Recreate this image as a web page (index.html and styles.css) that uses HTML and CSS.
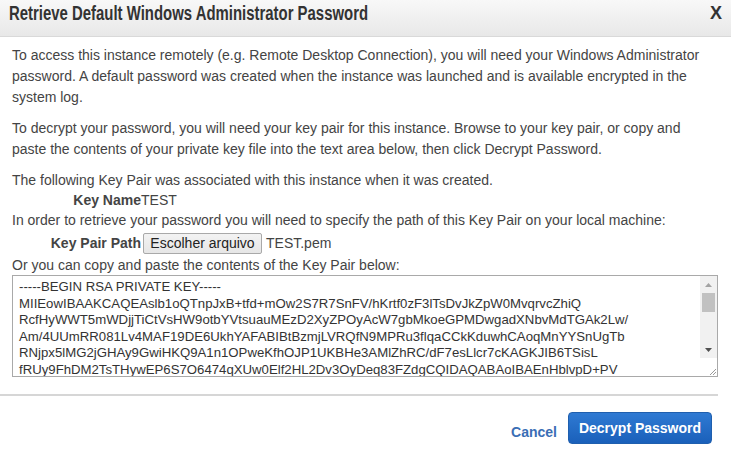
FILE: index.html
```html
<!DOCTYPE html>
<html>
<head>
<meta charset="utf-8">
<title>Retrieve Default Windows Administrator Password</title>
<link rel="stylesheet" href="styles.css">
</head>
<body>
<div class="modal">
  <div class="header">
    <h1 class="title">Retrieve Default Windows Administrator Password</h1>
    <span class="close">X</span>
  </div>
  <div class="content">
    <p class="para">To access this instance remotely (e.g. Remote Desktop Connection), you will need your Windows Administrator password. A default password was created when the instance was launched and is available encrypted in the system log.</p>
    <p class="para">To decrypt your password, you will need your key pair for this instance. Browse to your key pair, or copy and paste the contents of your private key file into the text area below, then click Decrypt Password.</p>
    <div class="info">
      <div class="line">The following Key Pair was associated with this instance when it was created.</div>
      <div class="field"><span class="label">Key Name</span><span>TEST</span></div>
      <div class="line">In order to retrieve your password you will need to specify the path of this Key Pair on your local machine:</div>
      <div class="field field-file"><span class="label">Key Pair Path</span><span class="filebtn">Escolher arquivo</span><span class="filename">TEST.pem</span></div>
      <div class="line">Or you can copy and paste the contents of the Key Pair below:</div>
    </div>
    <div class="textarea">
      <div class="ta-text">-----BEGIN RSA PRIVATE KEY-----
MIIEowIBAAKCAQEAslb1oQTnpJxB+tfd+mOw2S7R7SnFV/hKrtf0zF3lTsDvJkZpW0MvqrvcZhiQ
RcfHyWWT5mWDjjTiCtVsHW9otbYVtsuauMEzD2XyZPOyAcW7gbMkoeGPMDwgadXNbvMdTGAk2Lw/
Am/4UUmRR081Lv4MAF19DE6UkhYAFABIBtBzmjLVRQfN9MPRu3flqaCCkKduwhCAoqMnYYSnUgTb
RNjpx5lMG2jGHAy9GwiHKQ9A1n1OPweKfhOJP1UKBHe3AMlZhRC/dF7esLlcr7cKAGKJIB6TSisL
fRUy9FhDM2TsTHywEP6S7O6474qXUw0Elf2HL2Dv3OyDeq83FZdgCQIDAQABAoIBAEnHblvpD+PV</div>
      <div class="scrollbar">
        <div class="sb-btn"><svg width="7" height="4" viewBox="0 0 7 4"><path d="M0 4 L3.5 0 L7 4 Z" fill="#a3a3a3"/></svg></div>
        <div class="sb-track"><div class="sb-thumb"></div></div>
        <div class="sb-btn"><svg width="7" height="4" viewBox="0 0 7 4"><path d="M0 0 L3.5 4 L7 0 Z" fill="#505050"/></svg></div>
        <div class="sb-corner"><svg width="10" height="10" viewBox="0 0 10 10"><path d="M9 3 L3 9 M9 6 L6 9" stroke="#9a9a9a" stroke-width="1"/></svg></div>
      </div>
    </div>
  </div>
  <div class="divider"></div>
  <div class="footer">
    <a class="cancel">Cancel</a>
    <button class="primary">Decrypt Password</button>
  </div>
</div>
</body>
</html>
```
FILE: styles.css
```css
html, body {
  margin: 0;
  padding: 0;
  background: #ffffff;
}
body {
  font-family: "Liberation Sans", Arial, sans-serif;
  color: #444444;
  width: 731px;
  height: 452px;
  overflow: hidden;
}
.modal {
  display: flex;
  flex-direction: column;
}
.header {
  height: 36px;
  border-bottom: 1px solid #d9d9d9;
  background: linear-gradient(#f8f8f8, #e8e8e8);
  display: flex;
  align-items: center;
  justify-content: space-between;
  padding: 0 9px 0 9px;
}
.title {
  margin: 0;
  font-family: "Liberation Sans", Arial, sans-serif;
  font-size: 19.5px;
  font-weight: bold;
  color: #333333;
  line-height: 22px;
  margin-top: -10px;
  white-space: nowrap;
  transform: scaleX(0.765);
  transform-origin: left center;
}
.close {
  font-size: 18px;
  font-weight: bold;
  color: #333333;
  font-family: "Liberation Sans", Arial, sans-serif;
  margin-top: -10px;
}
.content {
  padding: 8px 13px 0 12px;
  font-size: 14px;
}
.para {
  margin: 0 0 10px 0;
  line-height: 21px;
}
.info {
  line-height: 20px;
}
.line {
  height: 20px;
  white-space: nowrap;
}
.field {
  display: flex;
  align-items: center;
  height: 20px;
}
.label {
  width: 129px;
  text-align: right;
  font-weight: bold;
  flex: none;
}
.field-file {
  height: 24px;
  margin-top: 1px;
}
.filebtn {
  margin-left: 2px;
  width: 117px;
  height: 19px;
  line-height: 19px;
  text-align: center;
  border: 1px solid #a9a9a9;
  border-radius: 2px;
  background: linear-gradient(#f3f3f3, #e6e6e6);
  color: #222222;
  font-size: 14px;
}
.filename {
  margin-left: 4px;
  color: #444444;
}
.textarea {
  height: 100px;
  margin-top: 0;
  border: 1px solid #a9a9a9;
  display: flex;
  overflow: hidden;
}
.ta-text {
  flex: 1;
  white-space: pre;
  overflow: hidden;
  padding: 3px 5px 0 6px;
  font-size: 13.2px;
  line-height: 16.6px;
  color: #333333;
}
.scrollbar {
  width: 17px;
  flex: none;
  display: flex;
  flex-direction: column;
  background: #f1f1f1;
}
.sb-btn {
  height: 17px;
  display: flex;
  align-items: center;
  justify-content: center;
}
.sb-track {
  flex: 1;
  padding: 0 2px;
}
.sb-thumb {
  height: 19px;
  background: #c1c1c1;
}
.sb-corner {
  height: 18px;
  background: #ffffff;
  display: flex;
  align-items: flex-end;
  justify-content: flex-end;
}
.divider {
  height: 0;
  border-top: 2px solid #d6d6d6;
  margin: 17px 13px 0 0;
}
.footer {
  display: flex;
  justify-content: flex-end;
  align-items: center;
  padding: 16px 19px 0 0;
}
.cancel {
  font-size: 14px;
  font-weight: bold;
  color: #3a6eb5;
  margin-right: 11px;
  margin-top: 8px;
}
.primary {
  width: 144px;
  height: 32px;
  border: 1px solid #1f5fae;
  border-radius: 4px;
  background: linear-gradient(#2f7ad3, #1a60ba);
  color: #ffffff;
  font-family: "Liberation Sans", Arial, sans-serif;
  font-size: 14px;
  font-weight: bold;
  padding: 0;
}
```
